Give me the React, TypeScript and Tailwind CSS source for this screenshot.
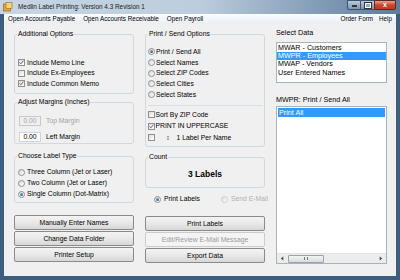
import React from 'react';

// Small Win7-style controls
function Check({ checked = false }: { checked?: boolean }) {
  return (
    <span className="relative inline-block w-[7px] h-[7px] shrink-0 border border-[#8f8f8f] bg-gradient-to-br from-[#dcdcdc] to-[#ffffff]">
      {checked && (
        <svg viewBox="0 0 8 8" className="absolute left-0 top-0 w-[5px] h-[5px]">
          <path d="M1 4 L3 6 L7 1" fill="none" stroke="#4a5f80" strokeWidth="1.5" />
        </svg>
      )}
    </span>
  );
}

function Radio({ checked = false, disabled = false }: { checked?: boolean; disabled?: boolean }) {
  return (
    <span
      className={
        'flex items-center justify-center w-[7px] h-[7px] shrink-0 rounded-full border bg-gradient-to-br from-[#d8d8d8] to-[#ffffff] ' +
        (disabled ? 'border-[#cfcfcf]' : 'border-[#8f8f8f]')
      }
    >
      {checked && <span className="w-[3px] h-[3px] rounded-full bg-gradient-to-br from-[#7ab8d8] to-[#1f4f74]" />}
    </span>
  );
}

function GroupBox({ title, className = '', children }: { title: string; className?: string; children?: React.ReactNode }) {
  return (
    <fieldset className={'border border-[#cfd9e0] rounded-[3px] ' + className}>
      <legend className="ml-[2px] px-[1px] h-[8px] leading-[8px] whitespace-nowrap">{title}</legend>
      {children}
    </fieldset>
  );
}

function Btn({ label, disabled = false }: { label: string; disabled?: boolean }) {
  return (
    <div
      className={
        'h-[15px] flex items-center justify-center rounded-[2px] border whitespace-nowrap ' +
        (disabled
          ? 'border-[#c9cbcd] bg-[#f4f4f4] text-[#9a9a9a]'
          : 'border-[#8a8a8a] bg-gradient-to-b from-[#f3f3f3] via-[#e9e9e9] to-[#d7d7d7] text-black')
      }
    >
      {label}
    </div>
  );
}

export default function App() {
  const menuLeft = ['Open Accounts Payable', 'Open Accounts Receivable', 'Open Payroll'];
  const sources = ['MWAR - Customers', 'MWPR - Employees', 'MWAP - Vendors', 'User Entered Names'];
  const filters = ['Print / Send All', 'Select Names', 'Select ZIP Codes', 'Select Cities', 'Select States'];

  return (
    <div className="w-[400px] h-[280px] flex flex-col bg-[#3d5d7e] text-[6.8px] leading-[8px] text-black font-['Liberation_Sans',Arial,sans-serif] overflow-hidden">
      {/* Title bar */}
      <div className="h-[14px] shrink-0 flex items-center bg-gradient-to-r from-[#c7d5e3] via-[#bccddd] to-[#5d7c9c]">
        <svg viewBox="0 0 10 10" className="w-[10px] h-[10px] ml-[3px]">
          <rect x="0.5" y="2" width="7" height="7" fill="#e8a23a" stroke="#9a5a10" strokeWidth="0.6" />
          <rect x="3" y="0.5" width="6" height="6" fill="#f6d27a" stroke="#9a6a20" strokeWidth="0.6" />
        </svg>
        <span className="ml-[5px] text-[6.4px] text-[#1a1a1a]">Medlin Label Printing: Version 4.3 Revision 1</span>
        <div className="ml-auto mr-[4px] flex self-start">
          <div className="w-[14px] h-[10px] border border-[#3b536c] rounded-bl-[2px] bg-gradient-to-b from-[#b9c9da] to-[#7f97b1] flex items-end justify-center pb-[2px]">
            <span className="w-[5px] h-[2px] bg-white border border-[#333]" />
          </div>
          <div className="w-[13px] h-[10px] border-y border-[#3b536c] bg-gradient-to-b from-[#b9c9da] to-[#7f97b1] flex items-center justify-center">
            <span className="w-[6px] h-[5px] border border-white outline outline-1 outline-[#333]" />
          </div>
          <div className="w-[22px] h-[10px] border border-[#5a2a20] rounded-br-[2px] bg-gradient-to-b from-[#e8a193] via-[#c9452e] to-[#c23a22] flex items-center justify-center text-white text-[7px] font-bold">
            x
          </div>
        </div>
      </div>

      {/* Menu bar */}
      <div className="h-[10px] shrink-0 mx-[4px] flex items-center bg-gradient-to-b from-[#fbfcfe] to-[#e9eef5] text-[6.3px] whitespace-nowrap">
        {menuLeft.map((m) => (
          <span key={m} className="ml-[4px] mr-[4px]">
            {m}
          </span>
        ))}
        <span className="ml-auto mr-[6px]">Order Form</span>
        <span className="mr-[4px]">Help</span>
      </div>

      {/* Client area */}
      <div className="flex-1 mx-[4px] mb-[4px] bg-[#f0f0f0] flex pl-[10px] gap-[11px] whitespace-nowrap">
        {/* Left column */}
        <div className="w-[120px] flex flex-col pt-[6px]">
          <GroupBox title="Additional Options">
            <div className="h-[55px] pt-[19.5px] px-[3px]">
              <div className="h-[10.5px] flex items-center gap-[2px]"><Check checked /> Include Memo Line</div>
              <div className="h-[10.5px] flex items-center gap-[2px]"><Check /> Include Ex-Employees</div>
              <div className="h-[10.5px] flex items-center gap-[2px]"><Check checked /> Include Common Memo</div>
            </div>
          </GroupBox>
          <GroupBox title="Adjust Margins (Inches)" className="mt-[4px]">
            <div className="h-[37px] pt-[10px] px-[4px] flex flex-col gap-[6px]">
              <div className="flex items-center gap-[5px] text-[#a3a3a3]">
                <span className="w-[22px] h-[10px] border border-[#c8c8c8] flex items-center justify-center">0.00</span>
                Top Margin
              </div>
              <div className="flex items-center gap-[5px]">
                <span className="w-[22px] h-[10px] border border-[#d0d4da] bg-white flex items-center justify-center">0.00</span>
                Left Margin
              </div>
            </div>
          </GroupBox>
          <GroupBox title="Choose Label Type" className="mt-[8px]">
            <div className="h-[42px] pt-[6.5px] px-[3px]">
              <div className="h-[11px] flex items-center gap-[2px]"><Radio /> Three Column (Jet or Laser)</div>
              <div className="h-[11px] flex items-center gap-[2px]"><Radio /> Two Column (Jet or Laser)</div>
              <div className="h-[11px] flex items-center gap-[2px]"><Radio checked /> Single Column (Dot-Matrix)</div>
            </div>
          </GroupBox>
          <div className="mt-[12px] flex flex-col gap-[1px]">
            <Btn label="Manually Enter Names" />
            <Btn label="Change Data Folder" />
            <Btn label="Printer Setup" />
          </div>
        </div>

        {/* Middle column */}
        <div className="w-[120px] flex flex-col pt-[6px]">
          <GroupBox title="Print / Send Options">
            <div className="h-[108px] pt-[8.5px] px-[1.5px]">
              {filters.map((f, i) => (
                <div key={f} className="h-[10.7px] flex items-center gap-[1.5px]">
                  <Radio checked={i === 0} /> {f}
                </div>
              ))}
              <div className="mt-[5px] border-t border-[#d5dfe5]" />
              <div className="mt-[3px]">
                <div className="h-[11.5px] flex items-center gap-[1px]"><Check /> Sort By ZIP Code</div>
                <div className="h-[11.5px] flex items-center gap-[1px]"><Check checked /> PRINT IN UPPERCASE</div>
                <div className="h-[11.5px] flex items-center">
                  <Check />
                  <svg viewBox="0 0 6 8" className="w-[4px] h-[6px] ml-[11px]">
                    <path d="M1 3 L3 1 L5 3 Z" fill="#555" />
                    <path d="M1 5 L3 7 L5 5 Z" fill="#555" />
                  </svg>
                  <span className="ml-[7px]">1 Label Per Name</span>
                </div>
              </div>
            </div>
          </GroupBox>
          <GroupBox title="Count" className="mt-[6px]">
            <div className="h-[26px] flex items-center justify-center text-[8.5px] font-bold">3 Labels</div>
          </GroupBox>
          <div className="mt-[6px] h-[10px] flex items-center pl-[9px]">
            <Radio checked />
            <span className="ml-[3px]">Print Labels</span>
            <span className="ml-[21px]"><Radio disabled /></span>
            <span className="ml-[3px] text-[#b0b0b0]">Send E-Mail</span>
          </div>
          <div className="mt-[12px] flex flex-col gap-[1px]">
            <Btn label="Print Labels" />
            <Btn label="Edit/Review E-Mail Message" disabled />
            <Btn label="Export Data" />
          </div>
        </div>

        {/* Right column */}
        <div className="w-[111px] flex flex-col pt-[5px] text-[7.2px]">
          <div className="h-[8px]">Select Data</div>
          <div className="mt-[5px] h-[41px] border border-[#a9b3bd] bg-white pt-[0.5px]">
            {sources.map((s, i) => (
              <div
                key={s}
                className={'h-[8.4px] leading-[8.4px] pl-[1px] ' + (i === 1 ? 'bg-[#3399ff] text-white' : '')}
              >
                {s}
              </div>
            ))}
          </div>
          <div className="mt-[13px] h-[8px]">MWPR: Print / Send All</div>
          <div className="mt-[2px] h-[158px] border border-[#a9b3bd] bg-white flex flex-col">
            <div className="mt-[1px] mx-[1px] h-[9px] leading-[9px] pl-[1px] bg-[#3399ff] text-white">Print All</div>
            <div className="mt-auto h-[10px] flex items-center bg-[#ececec] border-t border-[#e2e2e2]">
              <svg viewBox="0 0 6 6" className="w-[5px] h-[5px] ml-[3px]">
                <path d="M4 0.5 L1 3 L4 5.5 Z" fill="#444" />
              </svg>
              <div className="ml-[3px] w-[36px] h-[8px] rounded-[1px] border border-[#9aa1a8] bg-gradient-to-b from-[#f4f4f4] to-[#d9dcdf] flex items-center justify-center">
                <span className="w-[4px] h-[3px] border-x border-[#777]" />
              </div>
              <svg viewBox="0 0 6 6" className="w-[5px] h-[5px] ml-auto mr-[3px]">
                <path d="M2 0.5 L5 3 L2 5.5 Z" fill="#444" />
              </svg>
            </div>
          </div>
        </div>
      </div>
    </div>
  );
}
